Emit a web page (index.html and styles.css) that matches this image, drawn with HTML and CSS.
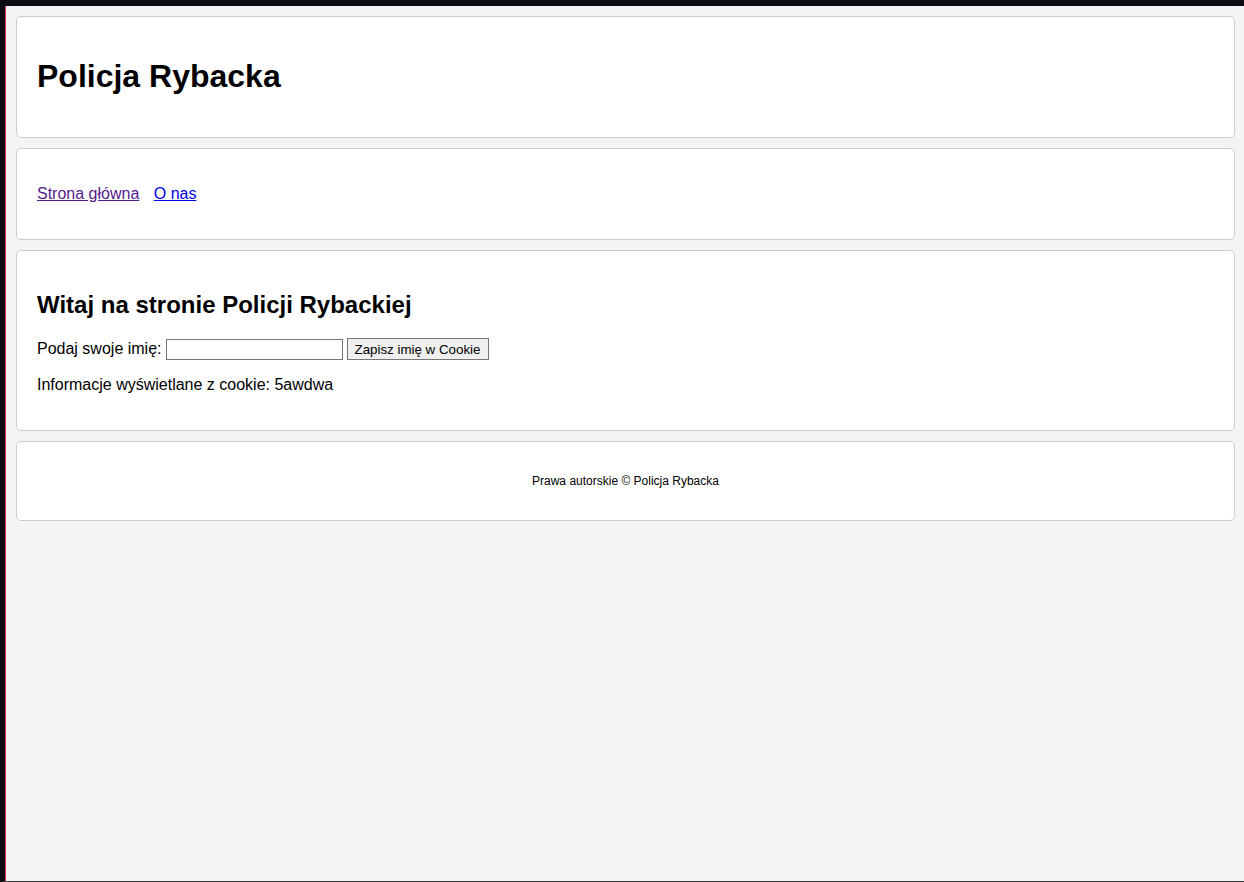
FILE: index.html
```html
<!DOCTYPE html>
<html lang="pl">
<head>
<meta charset="utf-8">
<title>Policja Rybacka</title>
<link rel="stylesheet" href="styles.css">
</head>
<body>
<div class="screen">
  <div class="page">
    <header class="card">
      <h1>Policja Rybacka</h1>
    </header>
    <nav class="card">
      <ul class="menu">
        <li><a href="#" class="visited">Strona główna</a></li>
        <li><a href="#">O nas</a></li>
      </ul>
    </nav>
    <main class="card">
      <h2>Witaj na stronie Policji Rybackiej</h2>
      <form class="name-form">
        <label for="imie">Podaj swoje imię:</label>
        <input type="text" id="imie" class="text-input">
        <button type="button" class="btn">Zapisz imię w Cookie</button>
      </form>
      <p>Informacje wyświetlane z cookie: 5awdwa</p>
    </main>
    <footer class="card footer">
      <p>Prawa autorskie © Policja Rybacka</p>
    </footer>
  </div>
</div>
</body>
</html>
```

FILE: styles.css
```css
html, body {
  margin: 0;
  padding: 0;
}
body {
  background: #0d0d14;
  font-family: "Liberation Sans", Arial, sans-serif;
  color: #000;
}
.screen {
  height: 882px;
  box-sizing: border-box;
  border-top: 6px solid #0d0d14;
  border-left: 5px solid #0d0d14;
  border-bottom: 1px solid #3a3a3a;
}
.page {
  height: 100%;
  box-sizing: border-box;
  background: #f4f4f4;
  border-left: 1px solid #e0325a;
  padding: 10px 9px 10px 10px;
  display: flow-root;
}
.card {
  display: block;
  background: #fff;
  border: 1px solid #ccc;
  border-radius: 5px;
  padding: 20px;
  margin-bottom: 10px;
}
h1 {
  font-size: 32px;
  margin: 21.44px 0;
}
h2 {
  font-size: 24px;
  margin: 19.92px 0;
}
.menu {
  list-style: none;
  padding: 0;
  margin: 16px 0;
}
.menu li {
  display: inline;
  margin-right: 10px;
}
.menu a {
  color: #0000ee;
}
.menu a.visited {
  color: #551a8b;
}
.name-form {
  margin: 16px 0;
  height: 21px;
  display: flex;
  align-items: center;
  gap: 4px;
}
.text-input {
  font-family: "Liberation Sans", Arial, sans-serif;
  font-size: 13.33px;
  width: 177px;
  height: 21px;
  box-sizing: border-box;
  padding: 1px 2px;
  border: 1px solid #767676;
  border-radius: 0;
  margin: 0;
}
.btn {
  font-family: "Liberation Sans", Arial, sans-serif;
  font-size: 13.33px;
  background: #efefef;
  border: 1px solid #767676;
  border-radius: 0;
  padding: 1px 8px 1px 7px;
  height: 22px;
  box-sizing: border-box;
  margin: 0;
}
p {
  margin: 16px 0;
}
.footer {
  text-align: center;
  font-size: 12px;
}
.footer p {
  margin: 12px 0;
}
```
